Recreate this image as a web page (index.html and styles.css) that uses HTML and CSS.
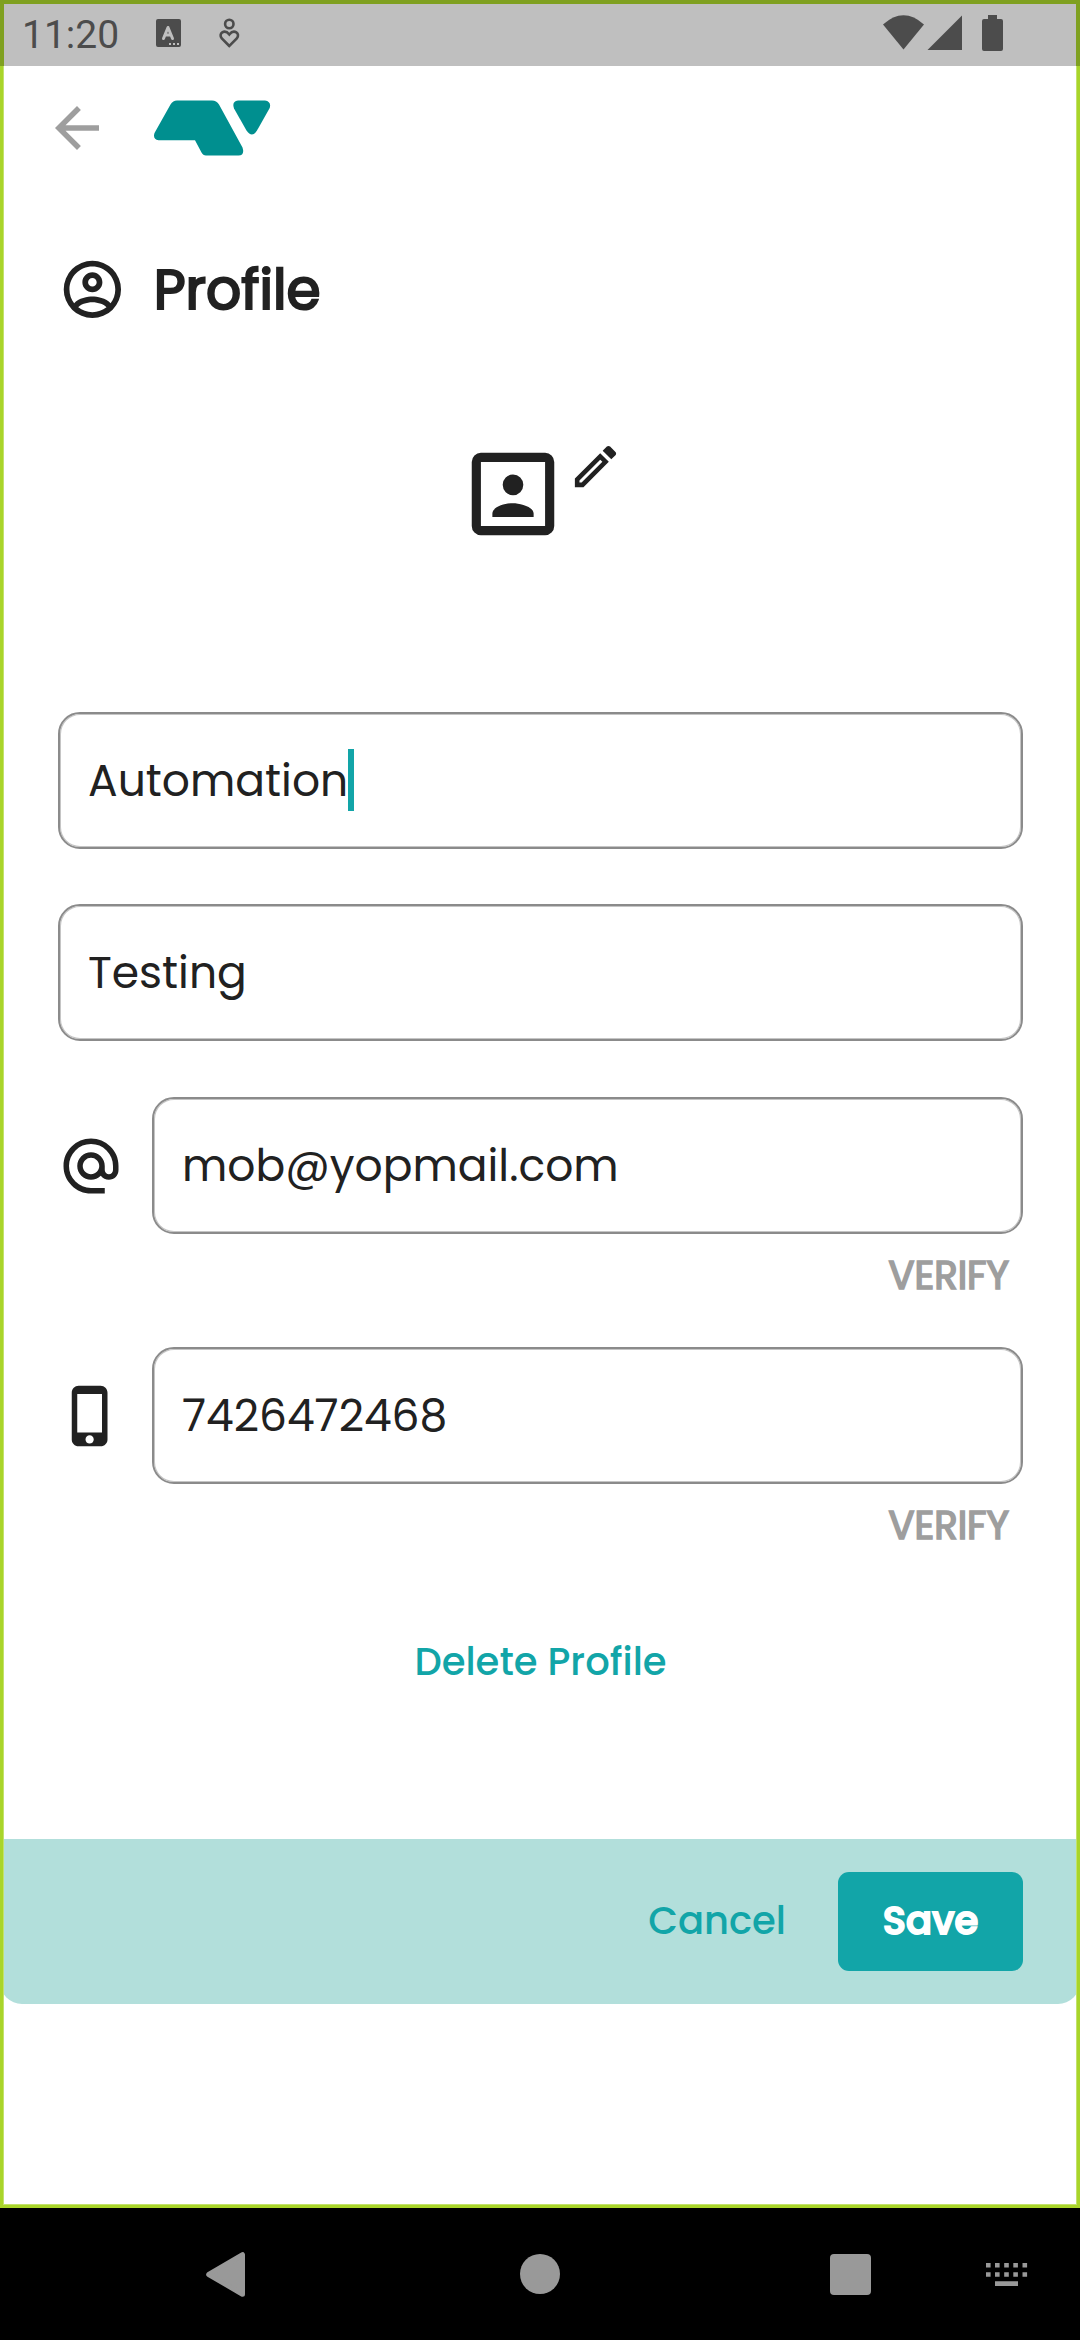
FILE: index.html
```html
<!DOCTYPE html>
<html lang="en">
<head>
<meta charset="utf-8">
<title>Profile</title>
<link rel="stylesheet" href="styles.css">
</head>
<body>
<div class="screen">
  <div class="status-bar">
    <span class="clock">11:20</span>
    <svg class="status-left" width="90" height="36" viewBox="154 15 90 36">
      <path fill="#4c4c4c" fill-rule="evenodd" d="M158 19H179Q181 19 181 21V45Q181 47 179 47H158Q156 47 156 45V21Q156 19 158 19ZM169 43v2h2v-2ZM173 43v2h2v-2ZM177 43v2h2v-2Z"/>
      <path fill="none" stroke="#bfbfbf" stroke-width="3" stroke-linecap="round" stroke-linejoin="round" d="M163.500 38.500L168 27.500L172.500 38.500M165 35H171"/>
      <g fill="none" stroke="#4c4c4c" stroke-width="2.600">
        <circle cx="229.300" cy="24" r="4.200"/>
        <path d="M229.300 46L221.800 38.500C217.800 33.500 224.500 28.500 229.300 34.500C234.100 28.500 240.800 33.500 236.800 38.500Z"/>
      </g>
    </svg>
    <svg class="status-right" width="122" height="38" viewBox="882 14 122 38" fill="#4c4c4c">
      <path d="M883 24.500Q903.500 6 924 24.500L903.500 49.500Z"/>
      <path d="M962 15.500V50H927.500Z"/>
      <path d="M988 15H997V19H1001Q1003 19 1003 21V49Q1003 51 1001 51H984Q982 51 982 49V21Q982 19 984 19H988Z"/>
    </svg>
  </div>

  <header class="app-bar">
    <svg class="back" width="66" height="66" viewBox="0 0 24 24"><path d="M20 11H7.830l5.590-5.590L12 4l-8 8 8 8 1.410-1.410L7.830 13H20v-2z"/></svg>
    <svg class="logo" width="118" height="56" viewBox="153 99.500 118 56">
      <path d="M177 100H212Q216.500 100 219 104L242.500 147Q245 155 238.500 155H206Q203 155 201.500 152L195 139.700H158.500Q152.500 138.500 154.500 132.500L170.500 104Q173 100 177 100Z"/>
      <path d="M238 100H265Q271.500 101 269.700 107.500L257 130Q252 138 246.500 130L234 108Q231.500 101 238 100Z"/>
    </svg>
  </header>

  <div class="title-row">
    <svg width="68.750" height="68.750" viewBox="0 0 24 24"><path d="M12,2A10,10 0 0,0 2,12A10,10 0 0,0 12,22A10,10 0 0,0 22,12A10,10 0 0,0 12,2M7.070,18.280C7.500,17.380 10.120,16.500 12,16.500C13.880,16.500 16.500,17.380 16.930,18.280C15.570,19.360 13.860,20 12,20C10.140,20 8.430,19.360 7.070,18.280M18.360,16.830C16.930,15.090 13.460,14.500 12,14.500C10.540,14.500 7.070,15.090 5.640,16.830C4.620,15.500 4,13.820 4,12C4,7.590 7.590,4 12,4C16.410,4 20,7.590 20,12C20,13.820 19.380,15.500 18.360,16.830M12,6C10.060,6 8.500,7.560 8.500,9.500C8.500,11.440 10.060,13 12,13C13.940,13 15.500,11.440 15.500,9.500C15.500,7.560 13.940,6 12,6M12,11A1.500,1.500 0 0,1 10.500,9.500A1.500,1.500 0 0,1 12,8A1.500,1.500 0 0,1 13.500,9.500A1.500,1.500 0 0,1 12,11Z"/></svg>
    <h1>Profile</h1>
  </div>

  <div class="photo-row">
    <svg width="110" height="110" viewBox="0 0 24 24"><path d="M19,19H5V5H19M19,3H5A2,2 0 0,0 3,5V19A2,2 0 0,0 5,21H19A2,2 0 0,0 21,19V5A2,2 0 0,0 19,3M16.500,16.250C16.500,14.750 13.500,14 12,14C10.500,14 7.500,14.750 7.500,16.250V17H16.500M12,12.250A2.250,2.250 0 0,0 14.250,10A2.250,2.250 0 0,0 12,7.750A2.250,2.250 0 0,0 9.750,10A2.250,2.250 0 0,0 12,12.250Z"/></svg>
    <svg width="55" height="55" viewBox="0 0 24 24"><path d="M14.060,9L15,9.940L5.920,19H5V18.080L14.060,9M17.660,3C17.410,3 17.150,3.100 16.960,3.290L15.130,5.120L18.880,8.870L20.710,7.040C21.100,6.650 21.100,6 20.710,5.630L18.370,3.290C18.170,3.090 17.920,3 17.660,3M14.060,6.190L3,17.250V21H6.750L17.810,9.940L14.060,6.190Z"/></svg>
  </div>

  <main class="form">
    <div class="field"><span>Automation</span><i class="caret"></i></div>
    <div class="field"><span>Testing</span></div>
    <div class="icon-field">
      <svg width="66" height="66" viewBox="0 0 24 24"><path d="M12,15C12.810,15 13.500,14.700 14.110,14.110C14.700,13.500 15,12.810 15,12C15,11.190 14.700,10.500 14.110,9.890C13.500,9.300 12.810,9 12,9C11.190,9 10.500,9.300 9.890,9.890C9.300,10.500 9,11.190 9,12C9,12.810 9.300,13.500 9.890,14.110C10.500,14.700 11.190,15 12,15M12,2C14.750,2 17.100,3 19.050,4.950C21,6.900 22,9.250 22,12V13.450C22,14.450 21.650,15.300 21,16C20.300,16.670 19.500,17 18.500,17C17.300,17 16.310,16.500 15.560,15.500C14.560,16.500 13.380,17 12,17C10.630,17 9.450,16.500 8.460,15.540C7.500,14.550 7,13.380 7,12C7,10.630 7.500,9.450 8.460,8.460C9.450,7.500 10.630,7 12,7C13.380,7 14.550,7.500 15.540,8.460C16.500,9.450 17,10.630 17,12V13.450C17,13.860 17.160,14.220 17.460,14.530C17.760,14.840 18.110,15 18.500,15C18.920,15 19.270,14.840 19.570,14.530C19.870,14.220 20,13.860 20,13.450V12C20,9.810 19.230,7.930 17.650,6.350C16.070,4.770 14.190,4 12,4C9.810,4 7.930,4.770 6.350,6.350C4.770,7.930 4,9.810 4,12C4,14.190 4.770,16.070 6.350,17.650C7.930,19.230 9.810,20 12,20H17V22H12C9.250,22 6.900,21 4.950,19.050C3,17.100 2,14.750 2,12C2,9.250 3,6.900 4.950,4.950C6.900,3 9.250,2 12,2Z"/></svg>
      <div class="field"><span>mob@yopmail.com</span></div>
    </div>
    <a class="verify">VERIFY</a>
    <div class="icon-field">
      <svg width="66" height="66" viewBox="0 0 24 24"><path d="M15.500 1h-8C6.120 1 5 2.120 5 3.500v17C5 21.880 6.120 23 7.500 23h8c1.380 0 2.500-1.120 2.500-2.500v-17C18 2.120 16.880 1 15.500 1zm-4 21c-.83 0-1.500-.67-1.500-1.500s.67-1.500 1.500-1.500 1.500.67 1.500 1.500-.67 1.500-1.500 1.500zm4.500-4H7V4h9v14z"/></svg>
      <div class="field"><span>7426472468</span></div>
    </div>
    <a class="verify">VERIFY</a>
    <a class="delete">Delete Profile</a>
  </main>

  <footer class="actions">
    <a class="cancel">Cancel</a>
    <a class="save">Save</a>
  </footer>

  <div class="spacer"></div>
  <nav class="nav-bar">
    <svg width="1080" height="132" viewBox="0 2208 1080 132" fill="#999">
      <path stroke="#999" stroke-width="5" stroke-linejoin="round" d="M208.700 2274.500L242.500 2254.700V2294.300Z"/>
      <circle cx="540" cy="2274" r="20"/>
      <rect x="830" y="2254" width="41" height="41" rx="4"/>
      <path d="M986 2263h4.600v4.600h-4.600zM995 2263h4.600v4.600h-4.600zM1004.200 2263h4.600v4.600h-4.600zM1013.300 2263h4.600v4.600h-4.600zM1022.500 2263h4.600v4.600h-4.600zM986 2272.200h4.600v4.600h-4.600zM995 2272.200h4.600v4.600h-4.600zM1004.200 2272.200h4.600v4.600h-4.600zM1013.300 2272.200h4.600v4.600h-4.600zM1022.500 2272.200h4.600v4.600h-4.600zM995 2281.300h23v4.600h-23z"/>
    </svg>
  </nav>
  <div class="focus-frame"></div>
  <div class="status-shade"></div>
</div>
</body>
</html>
```
FILE: styles.css
```css
* { box-sizing: border-box; }
body { margin: 0; background: #fff; }
svg { display: block; flex: none; }

.screen {
  position: relative;
  display: flex;
  flex-direction: column;
  width: 1080px;
  height: 2340px;
  background: #fff;
  color: #212121;
  fill: #212121;
  font-family: Poppins, Inter, "Open Sans", sans-serif;
}

/* System status bar */
.status-bar {
  display: flex;
  align-items: flex-start;
  height: 66px;
  padding: 14px 76px 0 22px;
  background: #bfbfbf;
}
.clock {
  width: 132px;
  font: 39px/42px Roboto, sans-serif;
  color: #4c4c4c;
}
.status-left { margin-top: 1px; }
.status-right { margin-left: auto; }

/* App bar */
.app-bar {
  display: flex;
  align-items: center;
  gap: 43px;
  height: 124px;
  padding-left: 44px;
}
.back { fill: #9e9e9e; }
.logo { fill: #008f8f; }

.title-row {
  display: flex;
  align-items: center;
  gap: 27px;
  height: 69px;
  margin-top: 65px;
  padding-left: 58px;
}
h1 {
  margin: 0;
  font-size: 55px;
  line-height: 68px;
  font-weight: 400;
  -webkit-text-stroke: 2.200px #212121;
}

.photo-row {
  display: flex;
  align-items: flex-start;
  height: 110px;
  margin-top: 115px;
  padding-left: 458px;
}

/* Form */
.form {
  display: flex;
  flex-direction: column;
  height: 1127px;
  margin-top: 163px;
  padding: 0 57px 0 58px;
}
.field {
  display: flex;
  align-items: center;
  flex: none;
  height: 137px;
  margin-bottom: 55px;
  padding-left: 28px;
  border: 2px solid #8b8b8b;
  border-radius: 22px;
  box-shadow: inset 0 0 0 1px rgba(139, 139, 139, 0.5);
  font-size: 44px;
}
.field + .field { margin-bottom: 56px; }
.caret {
  width: 6px;
  height: 62px;
  margin-bottom: 2px;
  background: #12a5a8;
}
.icon-field {
  display: flex;
  align-items: center;
  gap: 28px;
}
.icon-field .field {
  flex: 1;
  margin-bottom: 0;
}
.verify {
  display: block;
  height: 113px;
  padding: 18px 14px 0 0;
  text-align: right;
  font-size: 38.500px;
  line-height: 48px;
  font-weight: 400;
  -webkit-text-stroke: 1.700px #9e9e9e;
  color: #9e9e9e;
}
.delete {
  margin-top: 40px;
  text-align: center;
  font-size: 38.500px;
  line-height: 50px;
  font-weight: 500;
  color: #12a5a8;
}

/* Bottom actions */
.actions {
  display: flex;
  align-items: center;
  justify-content: flex-end;
  gap: 52px;
  height: 165px;
  padding-right: 57px;
  background: #b2dfdb;
  border-radius: 0 0 22px 22px;
}
.cancel {
  margin-top: -2px;
  font-size: 38.500px;
  font-weight: 500;
  color: #12a5a8;
}
.save {
  width: 185px;
  height: 99px;
  border-radius: 11px;
  background: #12a5a8;
  color: #fff;
  font-size: 38.500px;
  line-height: 98px;
  font-weight: 500;
  -webkit-text-stroke: 1.900px #fff;
  text-align: center;
}

.spacer { flex: 1; }
.nav-bar { height: 132px; background: #000; }

/* Focus outline drawn over the whole app window */
.focus-frame {
  position: absolute;
  inset: 0 0 132px;
  border: 3px solid #a9d52a;
  box-shadow: inset 0 0 0 1px #c3e26c;
}
.status-shade {
  position: absolute;
  inset: 0 0 auto;
  height: 66px;
  border: solid #7fa020;
  border-width: 4px 4px 0;
}
```
